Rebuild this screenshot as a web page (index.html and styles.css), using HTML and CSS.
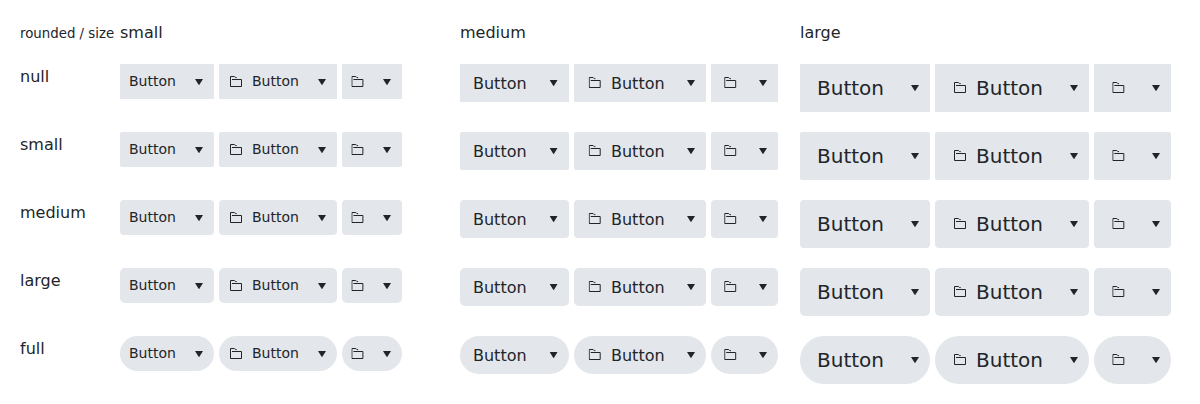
FILE: index.html
```html
<!DOCTYPE html>
<html lang="en">
<head>
<meta charset="utf-8">
<title>Split buttons</title>
<link rel="stylesheet" href="styles.css">
</head>
<body>
<svg class="defs" aria-hidden="true">
<symbol id="folder" viewBox="0 0 13 12"><path d="M6.700 1.600H5.500L4.500.5H.5V10.500H11.500V3.500H2" fill="none" stroke="currentColor"/></symbol>
<symbol id="caret" viewBox="0 0 8 6"><path d="M0 0H8L4.200 6H3.800Z" fill="currentColor"/></symbol>
</svg>
<main class="grid" id="grid">
<div class="corner">rounded / size</div><div class="head">small</div><div class="head">medium</div><div class="head">large</div>
</main>
<script src="main.js"></script>
</body>
</html>
```
FILE: styles.css
```css
body { margin: 0; background: #fff; color: #212529; font: 16px/24px "DejaVu Sans", sans-serif; }
.defs { display: none; }
.grid { display: grid; grid-template-columns: 100px 340px 340px 380px; grid-template-rows: 44px repeat(5, 68px); padding: 20px; }
.corner { font-size: 13.333px; white-space: nowrap; line-height: 26px; padding-top: 1px; }
.head, .name { padding-top: 1px; }
.group { display: flex; gap: 5px; align-items: flex-start; }
.button { display: flex; align-items: center; box-sizing: border-box; background: #e3e6ea; }
.label { white-space: nowrap; }
.folder { width: 13px; height: 12px; flex: none; overflow: visible; }
.caret { width: 8px; height: 6px; flex: none; margin-left: auto; }
.s .button { height: 35px; padding: 0 11px 0 9px; font-size: 14px; }
.m .button { height: 38px; padding: 0 11px 0 13px; font-size: 16px; }
.l .button { height: 48px; padding: 0 11px 0 17px; font-size: 20px; }
.s .label { margin-bottom: 2px; }
.m .label { margin-top: 2px; }
.s .text { width: 94px; }
.s .both { width: 118px; }
.s .icon { width: 60px; }
.m .text { width: 109px; }
.m .both { width: 132px; }
.m .icon { width: 67px; }
.l .text { width: 130px; }
.l .both { width: 154px; }
.l .icon { width: 77px; }
.both .folder { margin-right: 8px; margin-left: 2px; }
.both .label { margin-left: 1px; }
.m .both .folder { transform: translateX(-.3px); }
.icon .folder { transform: translateX(.4px); }
.l .icon .folder { transform: translateX(1.300px); }
.m .text .caret { transform: translateX(-.4px); }
.m .icon .folder { transform: translateX(.2px); }
.r-small .button { border-radius: 2px; }
.r-medium .button { border-radius: 4px; }
.r-large .button { border-radius: 5px; }
.r-full .button { border-radius: 100px; }
```
FILE: main.js
```javascript
const icon = name => `<svg class="${name}"><use href="#${name}"/></svg>`;
const label = '<span class="label">Button</span>';
const button = (kind, content) => `<div class="button ${kind}">${content}${icon('caret')}</div>`;
const group = (size, round) => `<div class="group ${size} r-${round}">${button('text', label)}${button('both', icon('folder') + label)}${button('icon', icon('folder'))}</div>`;
document.getElementById('grid').insertAdjacentHTML('beforeend',
  ['null', 'small', 'medium', 'large', 'full'].map(r => `<div class="name">${r}</div>` + ['s', 'm', 'l'].map(s => group(s, r)).join('')).join(''));
```
